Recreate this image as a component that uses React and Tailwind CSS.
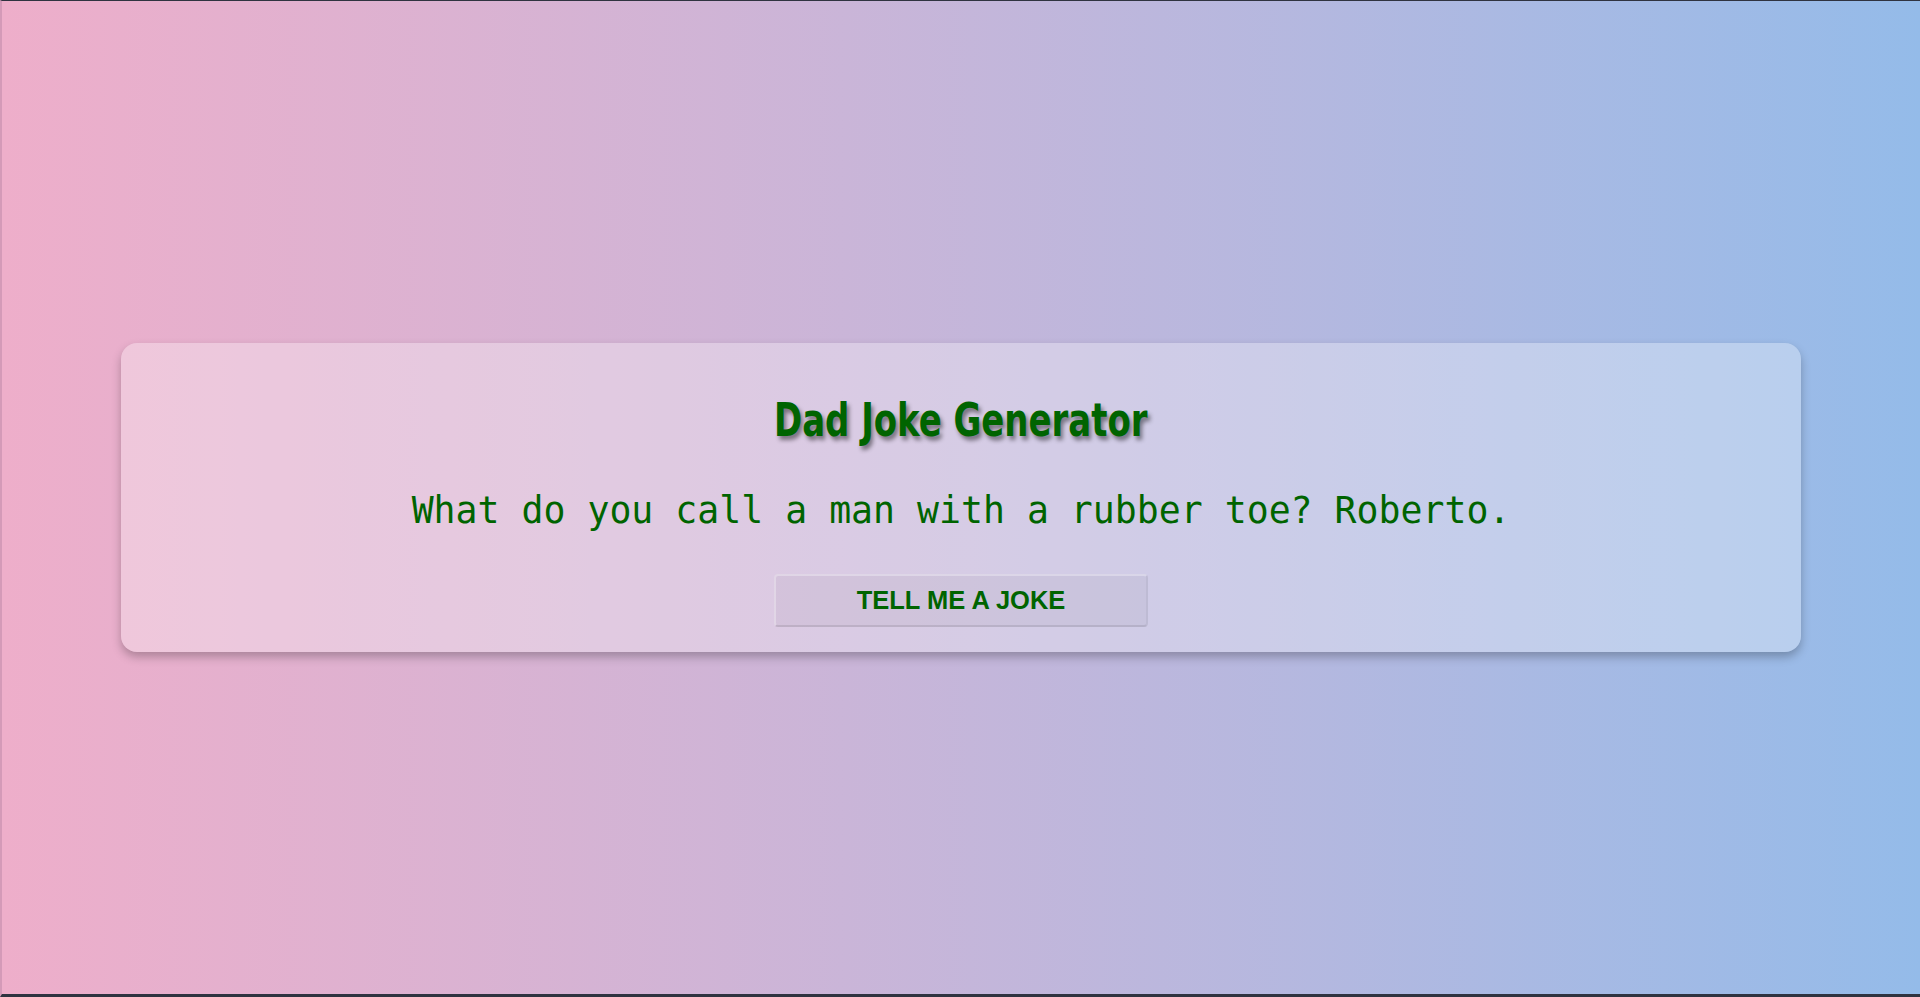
import React, { useState } from 'react';

const jokes = [
  'What do you call a man with a rubber toe? Roberto.',
  'I used to hate facial hair, but then it grew on me.',
  'Why did the scarecrow win an award? He was outstanding in his field.',
];

const App = () => {
  const [joke, setJoke] = useState(jokes[0]);

  const nextJoke = () => {
    const i = (jokes.indexOf(joke) + 1) % jokes.length;
    setJoke(jokes[i]);
  };

  return (
    <div className="h-[997px] w-full flex items-center justify-center bg-gradient-to-r from-[#eeaeca] to-[#94bbe9] border-t border-t-[#2f3340] border-b-[3px] border-b-[#2f3340] border-l-2 border-l-[#d49ab8]">
      <div className="w-[1680px] h-[309px] flex flex-col items-center rounded-2xl bg-white/30 pt-[54px] shadow-[0_5px_10px_rgba(0,0,0,0.25)]">
        <h1 className="inline-block text-[46px] leading-none font-bold text-[#006400] scale-x-[0.82] [font-family:'DejaVu_Sans_Condensed','DejaVu_Sans',sans-serif] [font-stretch:condensed] [text-shadow:3px_4px_5px_rgba(0,0,0,0.45)]">
          Dad Joke Generator
        </h1>
        <p className="mt-[50px] text-[36.5px] leading-none text-[#006400] [font-family:'DejaVu_Sans_Mono',monospace]">
          {joke}
        </p>
        <button
          onClick={nextJoke}
          className="mt-[44px] w-[374px] h-[53px] rounded border-2 border-white/30 border-b-black/10 border-r-black/5 bg-black/[0.035] text-[25.5px] font-bold text-[#006400] [font-family:'Liberation_Sans',Arial,sans-serif] cursor-pointer"
        >
          TELL ME A JOKE
        </button>
      </div>
    </div>
  );
};

export default App;
